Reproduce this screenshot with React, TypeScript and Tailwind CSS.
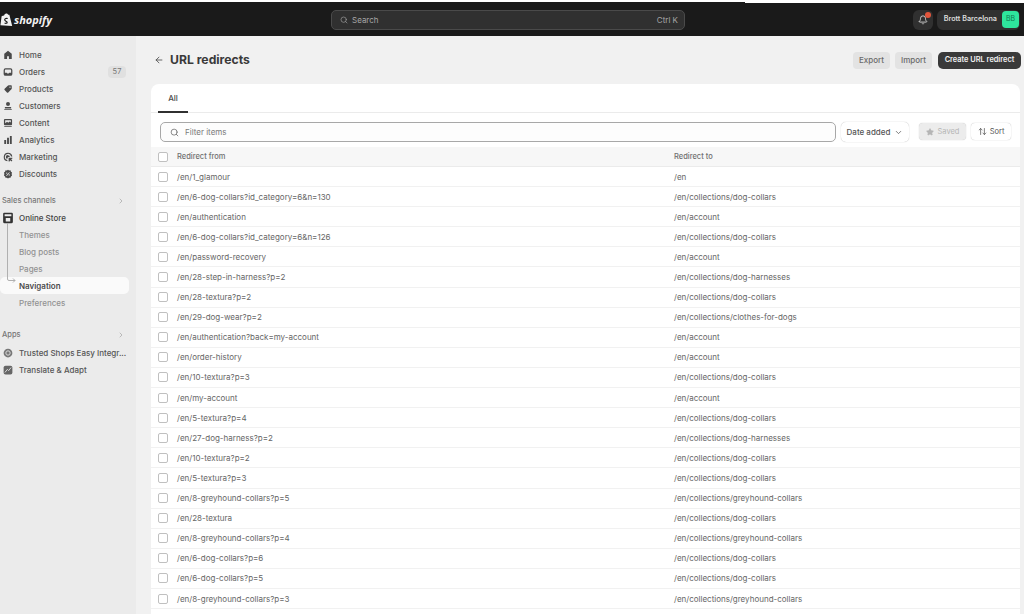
import { ArrowLeft, ArrowUpDown, ChevronDown, ChevronRight, Search, Star, Bell } from 'lucide-react';
import type { ReactNode } from 'react';

const rows: [string, string][] = [
  ['/en/1_glamour', '/en'],
  ['/en/6-dog-collars?id_category=6&n=130', '/en/collections/dog-collars'],
  ['/en/authentication', '/en/account'],
  ['/en/6-dog-collars?id_category=6&n=126', '/en/collections/dog-collars'],
  ['/en/password-recovery', '/en/account'],
  ['/en/28-step-in-harness?p=2', '/en/collections/dog-harnesses'],
  ['/en/28-textura?p=2', '/en/collections/dog-collars'],
  ['/en/29-dog-wear?p=2', '/en/collections/clothes-for-dogs'],
  ['/en/authentication?back=my-account', '/en/account'],
  ['/en/order-history', '/en/account'],
  ['/en/10-textura?p=3', '/en/collections/dog-collars'],
  ['/en/my-account', '/en/account'],
  ['/en/5-textura?p=4', '/en/collections/dog-collars'],
  ['/en/27-dog-harness?p=2', '/en/collections/dog-harnesses'],
  ['/en/10-textura?p=2', '/en/collections/dog-collars'],
  ['/en/5-textura?p=3', '/en/collections/dog-collars'],
  ['/en/8-greyhound-collars?p=5', '/en/collections/greyhound-collars'],
  ['/en/28-textura', '/en/collections/dog-collars'],
  ['/en/8-greyhound-collars?p=4', '/en/collections/greyhound-collars'],
  ['/en/6-dog-collars?p=6', '/en/collections/dog-collars'],
  ['/en/6-dog-collars?p=5', '/en/collections/dog-collars'],
  ['/en/8-greyhound-collars?p=3', '/en/collections/greyhound-collars'],
];

// Small filled nav glyphs, 10px box
const icons: Record<string, ReactNode> = {
  Home: <path d="M8 1 2 6v8.500h4.500V10h3v4.500H14V6z" />,
  Orders: <path fillRule="evenodd" d="M4 2h8a3 3 0 0 1 3 3v6a3 3 0 0 1-3 3H4a3 3 0 0 1-3-3V5a3 3 0 0 1 3-3zm0 2a1 1 0 0 0-1 1v4h3l1 1.500h2L10 9h3V5a1 1 0 0 0-1-1z" />,
  Products: <path fillRule="evenodd" d="M9 2h4a1 1 0 0 1 1 1v4a2 2 0 0 1-.6 1.400l-5 5a1.500 1.500 0 0 1-2.100 0L2.600 9.700a1.500 1.500 0 0 1 0-2.100l5-5A2 2 0 0 1 9 2zm2.200 2a1 1 0 1 0 0 2 1 1 0 0 0 0-2z" />,
  Customers: <path d="M8 1.500a3.200 3.200 0 1 1 0 6.400 3.200 3.200 0 0 1 0-6.400zM3 9.500h10V12H3zM2 13h12v1.500H2z" />,
  Content: <path fillRule="evenodd" d="M3 1.500h10A1.500 1.500 0 0 1 14.500 3v7a1.500 1.500 0 0 1-1.500 1.500H3A1.500 1.500 0 0 1 1.500 10V3A1.500 1.500 0 0 1 3 1.500zM3.500 3.500v5l3-2.500 2 1.500 2-2 2 1.500V3.500zM2 13h12v1.500H2z" />,
  Analytics: <path d="M2 8h3v6.500H2zM6.500 4.500h3v10h-3zM11 1.500h3v13h-3z" />,
  Marketing: <path fillRule="evenodd" d="M8 1a7 7 0 0 1 6.900 6h-2A5 5 0 1 0 7 12.900v2A7 7 0 0 1 8 1zm0 4a3 3 0 0 1 3 3H8.500L7 9.500V11a3 3 0 0 1 1-6zm1 4h6v1.500l-2 1 2 2-1.500 1.500-2-2-1 2H9z" />,
  Discounts: <path fillRule="evenodd" d="M8 1l1.800 1.200 2.200-.1.700 2.100 1.800 1.300-.7 2.500.7 2.500-1.800 1.300-.7 2.100-2.200-.1L8 15l-1.800-1.200-2.200.1-.7-2.100-1.800-1.300L2.200 8 1.500 5.500l1.800-1.300.7-2.100 2.200.1zM6 5.500a1 1 0 1 0 0 2 1 1 0 0 0 0-2zm4 3a1 1 0 1 0 0 2 1 1 0 0 0 0-2zM10 5 5 10.500l1 .7 5-5.500z" />,
};

function NavIcon({ name }: { name: string }) {
  return <svg viewBox="0 0 16 16" className="w-[10px] h-[10px] shrink-0 fill-[#4a4a4a]">{icons[name]}</svg>;
}

function NavItem({ name, badge }: { name: string; badge?: string }) {
  return (
    <div className="flex h-[17px] items-center pl-[3px] pr-[10px]">
      <NavIcon name={name} />
      <span className="ml-[6px] flex-1 text-[8px] font-medium text-[#555]">{name}</span>
      {badge && <span className="flex h-[12px] w-[18px] items-center justify-center rounded-[4px] bg-[#e0e0e0] text-[7.5px] text-[#777]">{badge}</span>}
    </div>
  );
}

function SubItem({ label, active }: { label: string; active?: boolean }) {
  return (
    <div className={active ? 'mr-[7px] flex h-[17px] items-center rounded-[5px] bg-[#fafafa] pl-[19px] text-[8px] font-semibold text-[#4a4a4a]' : 'mr-[7px] flex h-[17px] items-center pl-[19px] text-[8px] font-medium text-[#929292]'}>
      {label}
    </div>
  );
}

function Sidebar() {
  return (
    <aside className="flex w-[136px] shrink-0 flex-col bg-[#ebebeb] pt-[10px]">
      <NavItem name="Home" />
      <NavItem name="Orders" badge="57" />
      <NavItem name="Products" />
      <NavItem name="Customers" />
      <NavItem name="Content" />
      <NavItem name="Analytics" />
      <NavItem name="Marketing" />
      <NavItem name="Discounts" />
      <div className="mt-[10px] flex h-[17px] items-center justify-between pl-[2px] pr-[11px] text-[7.5px] font-medium text-[#777]">
        Sales channels <ChevronRight className="h-[8px] w-[8px] text-[#a0a0a0]" />
      </div>
      <div className="relative">
        <div className="flex h-[17px] items-center pl-[2px]">
          <svg viewBox="0 0 16 16" className="h-[12px] w-[12px] fill-[#333]">
            <path fillRule="evenodd" d="M3 1h10a1.500 1.500 0 0 1 1.500 1.500V13a2 2 0 0 1-2 2h-9a2 2 0 0 1-2-2V2.500A1.500 1.500 0 0 1 3 1zM3.500 3v2.500h9V3zM5 8v4.500h6V8z" />
          </svg>
          <span className="ml-[5px] text-[8px] font-medium text-[#444]">Online Store</span>
        </div>
        <SubItem label="Themes" />
        <SubItem label="Blog posts" />
        <SubItem label="Pages" />
        <SubItem label="Navigation" active />
        <SubItem label="Preferences" />
        <svg className="absolute left-[7px] top-[14px] h-[64px] w-[9px]" viewBox="0 0 9 64" fill="none" stroke="#b0b0b0">
          <path d="M.5 0v56q0 1.500 1.500 1.500h6M6 55.500l2 2-2 2" />
        </svg>
      </div>
      <div className="mt-[15px] flex h-[18px] items-center justify-between pl-[2px] pr-[11px] text-[7.5px] font-medium text-[#777]">
        Apps <ChevronRight className="h-[8px] w-[8px] text-[#a0a0a0]" />
      </div>
      <div className="flex h-[17px] items-center pl-[3px]">
        <svg viewBox="0 0 16 16" className="h-[10px] w-[10px]">
          <circle cx="8" cy="8" r="7" fill="#777" />
          <circle cx="8" cy="8" r="3.500" fill="none" stroke="#ddd" strokeWidth="1.500" />
        </svg>
        <span className="ml-[6px] whitespace-nowrap text-[8px] font-medium text-[#555]">Trusted Shops Easy Integr...</span>
      </div>
      <div className="flex h-[17px] items-center pl-[3px]">
        <svg viewBox="0 0 16 16" className="h-[10px] w-[10px]">
          <rect x="1" y="1" width="14" height="14" rx="3" fill="#666" />
          <path d="M3 12l4-5 2 2 4-5" fill="none" stroke="#ddd" strokeWidth="1.500" />
        </svg>
        <span className="ml-[6px] text-[8px] font-medium text-[#555]">Translate &amp; Adapt</span>
      </div>
    </aside>
  );
}

function TopBar() {
  return (
    <header className="flex h-[33px] shrink-0 items-center bg-[#1a1a1a]">
      <div className="flex w-[331px] shrink-0 items-center">
        <svg viewBox="0 0 16 18" className="h-[16px] w-[13px] shrink-0">
          <path d="M2 4.500C3 4 4 3.800 5 3.500 5.500 1.500 7 .5 8.500 1c.8.3 1.200 1 1.500 1.500L11.500 2.500 15 16.500.5 15.500z" fill="#f2f2f2" />
          <path d="M9.500 7.200C8 6.700 5.800 7 5.800 8.700s3 1.800 3 3.300c0 1.200-1.800 1.300-3.200.6" fill="none" stroke="#1a1a1a" strokeWidth="1.500" />
        </svg>
        <span className="ml-[1px] text-[11px] font-bold italic leading-none text-[#f2f2f2] [font-family:'Open_Sans',sans-serif]">shopify</span>
      </div>
      <div className="flex h-[20px] w-[354px] shrink-0 items-center rounded-[5px] border border-[#4a4a4a] bg-[#303030] pl-[8px] pr-[6px]">
        <Search className="h-[8px] w-[8px] text-[#a0a0a0]" />
        <span className="ml-[4px] flex-1 text-[8px] text-[#a6a6a6]">Search</span>
        <span className="text-[8px] text-[#a6a6a6]">Ctrl K</span>
      </div>
      <div className="ml-auto flex items-center gap-[4px] pr-[4px]">
        <div className="relative flex h-[20px] w-[20px] items-center justify-center rounded-[6px] bg-[#303030]">
          <Bell className="h-[10px] w-[10px] text-[#e3e3e3]" />
          <span className="absolute right-[2px] top-[2px] h-[6px] w-[6px] rounded-full bg-[#e2553c]" />
        </div>
        <div className="flex h-[20px] items-center rounded-[6px] bg-[#303030] pl-[7px] pr-[1px]">
          <span className="text-[7.2px] font-semibold text-[#dcdcdc]">Brott Barcelona</span>
          <span className="ml-[5px] flex h-[17px] w-[17px] items-center justify-center rounded-[4px] bg-[#2ee59d] text-[7px] text-[#0f7a50]">BB</span>
        </div>
      </div>
    </header>
  );
}

function Checkbox() {
  return <span className="h-[10px] w-[10px] shrink-0 rounded-[2px] border border-[#c0c0c0] bg-white" />;
}

function Card() {
  return (
    <section className="mr-[4px] flex-1 overflow-hidden rounded-t-[8px] bg-white">
      <div className="flex h-[29px] border-b border-[#ebebeb] pl-[7px]">
        <div className="flex h-[29px] w-[30px] items-center justify-center border-b-[2px] border-[#303030] text-[8px] font-medium text-[#4a4a4a]">All</div>
      </div>
      <div className="flex h-[34px] items-start pl-[9px] pr-[9px] pt-[9px]">
        <div className="flex h-[20px] flex-1 items-center rounded-[5px] border border-[#a8a8a8] bg-[#fdfdfd] pl-[9px]">
          <Search className="h-[9px] w-[9px] text-[#666]" />
          <span className="ml-[6px] text-[8px] text-[#7a7a7a]">Filter items</span>
        </div>
        <div className="ml-[5px] flex h-[20px] w-[68px] items-center justify-center gap-[4px] rounded-[5px] bg-white text-[8px] font-medium text-[#555] shadow-[0_0_1px_rgba(0,0,0,0.35)]">
          Date added <ChevronDown className="h-[9px] w-[9px]" />
        </div>
        <div className="ml-[10px] mt-[1px] flex h-[17px] w-[47px] items-center justify-center gap-[4px] rounded-[4px] bg-[#ececec] text-[7.5px] text-[#b5b5b5] shadow-[0_0_1px_rgba(0,0,0,0.3)]">
          <Star className="h-[8px] w-[8px] fill-[#b5b5b5]" /> Saved
        </div>
        <div className="ml-[5px] mt-[1px] flex h-[17px] w-[40px] items-center justify-center gap-[3px] rounded-[4px] bg-white text-[7.5px] text-[#555] shadow-[0_0_1px_rgba(0,0,0,0.35)]">
          <ArrowUpDown className="h-[9px] w-[9px]" /> Sort
        </div>
      </div>
      <div className="flex h-[20px] items-center border-b border-[#ebebeb] bg-[#f7f7f7] pl-[7px] text-[7.5px] font-medium text-[#707070]">
        <Checkbox />
        <span className="ml-[9px] w-[497px]">Redirect from</span>
        <span>Redirect to</span>
      </div>
      {rows.map(([from, to]) => (
        <div key={from} className="flex h-[20.1px] items-center border-b border-[#f1f1f1] pl-[7px] text-[8px] text-[#666]">
          <Checkbox />
          <span className="ml-[9px] w-[497px]">{from}</span>
          <span>{to}</span>
        </div>
      ))}
      {/* next row is cut off by the window, only its checkbox shows */}
      <div className="flex h-[20.1px] items-center pl-[7px]">
        <Checkbox />
      </div>
    </section>
  );
}

export default function App() {
  return (
    <div className="flex h-[614px] w-[1024px] flex-col overflow-hidden bg-white [font-family:Inter,sans-serif]">
      <div className="flex h-[3px] shrink-0 items-end">
        <div className="h-[1px] w-[745px] bg-[#1a1a1a]" />
      </div>
      <TopBar />
      <div className="flex min-h-0 flex-1">
        <Sidebar />
        <main className="flex min-w-0 flex-1 flex-col bg-[#f1f1f1] pl-[15px]">
          <div className="flex h-[48px] shrink-0 items-center pr-[3px]">
            <ArrowLeft className="ml-[3px] h-[10px] w-[10px] text-[#4a4a4a]" />
            <h1 className="ml-[6px] text-[12.2px] font-bold text-[#3a3a3a]">URL redirects</h1>
            <div className="ml-auto flex items-center">
              <span className="flex h-[17px] w-[37px] items-center justify-center rounded-[4px] bg-[#e3e3e3] text-[8px] font-medium text-[#6a6a6a]">Export</span>
              <span className="ml-[5px] flex h-[17px] w-[37px] items-center justify-center rounded-[4px] bg-[#e3e3e3] text-[8px] font-medium text-[#6a6a6a]">Import</span>
              <span className="ml-[6px] flex h-[17px] w-[83px] items-center justify-center rounded-[5px] bg-[#3a3a3a] text-[7.4px] font-semibold text-[#f1f1f1]">Create URL redirect</span>
            </div>
          </div>
          <Card />
        </main>
      </div>
    </div>
  );
}
